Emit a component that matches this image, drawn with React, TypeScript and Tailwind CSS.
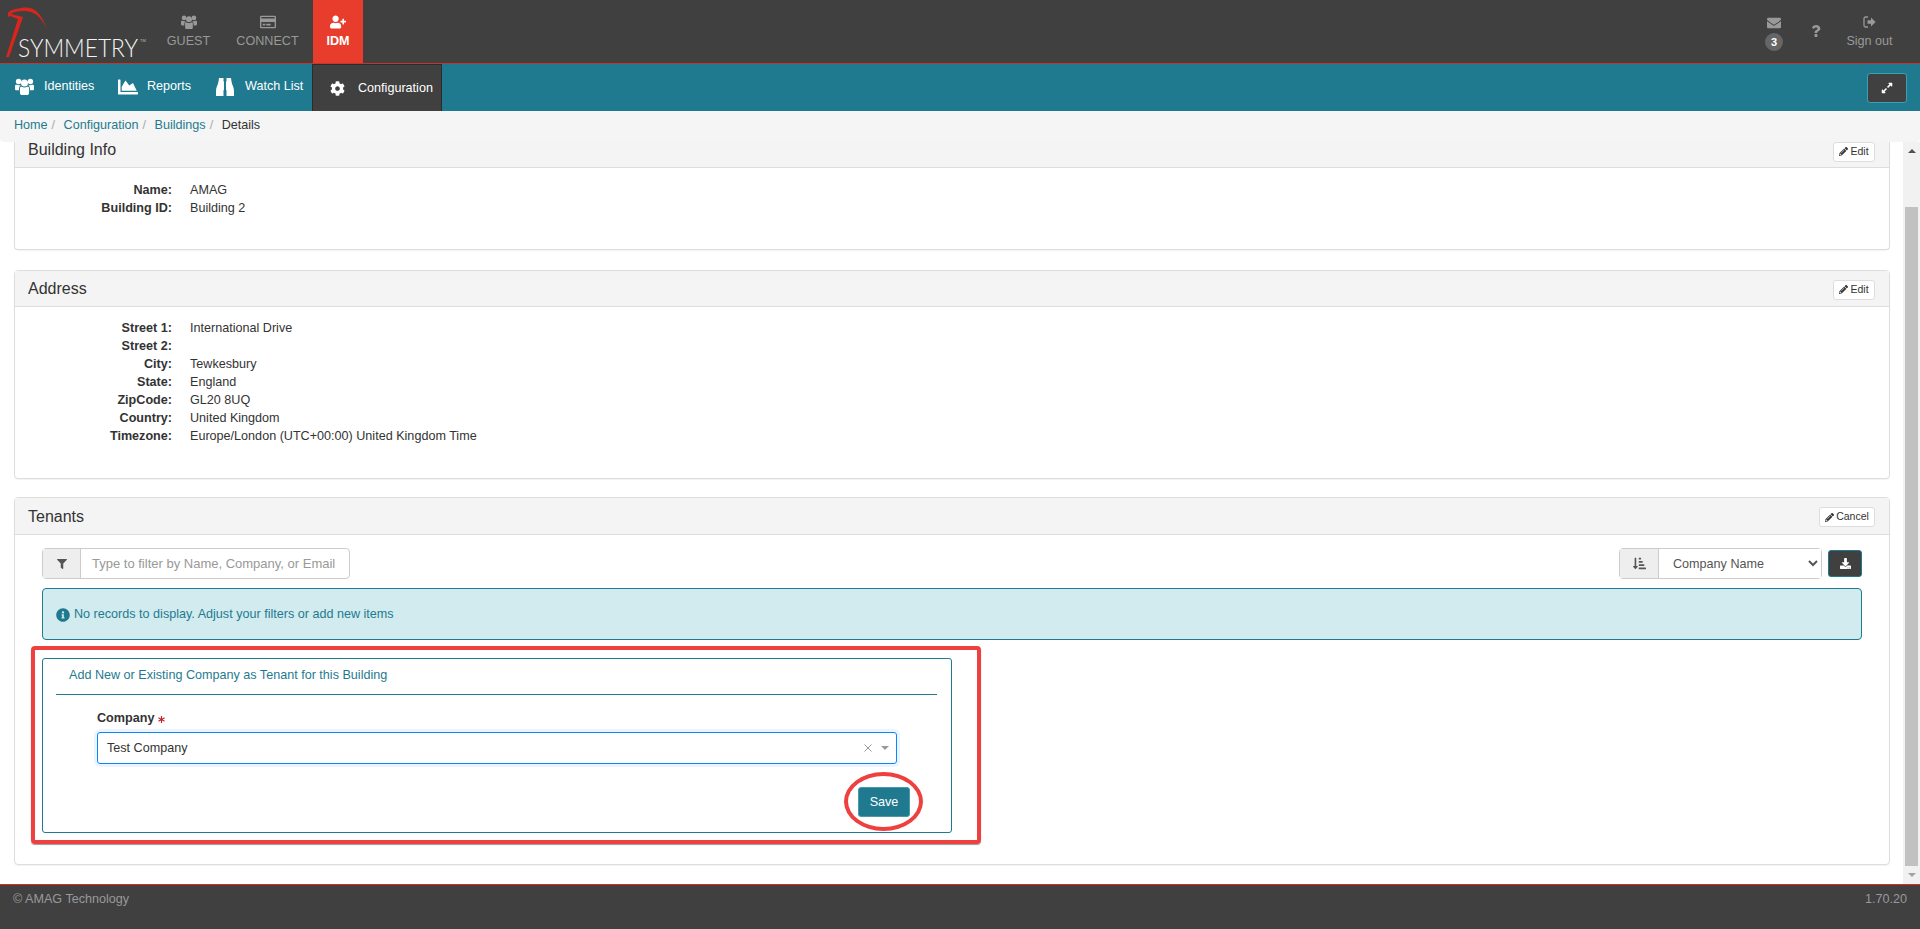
import type { ReactNode } from "react";
import {
  FaAsterisk,
  FaChartArea,
  FaCog,
  FaDownload,
  FaEnvelope,
  FaExpandAlt,
  FaFilter,
  FaInfoCircle,
  FaPencilAlt,
  FaQuestion,
  FaRegCreditCard,
  FaSortAmountDownAlt,
  FaUserPlus,
} from "react-icons/fa";

const Logo = () => (
  <svg width="150" height="63" viewBox="0 0 150 63" className="shrink-0">
    <path
      d="M8 17 L8 13 C10 10 15 9 21 8 C32 6 40 10 47 29 C41 17 35 11 24 11 C18 11 13 12 11 14 L23 17 L9 57 L6 57 L18 19 L10 16 Z"
      fill="#d9261c"
    />
    <text x="18" y="57" fontSize="25" fontWeight="300" fill="#f2f2f2" textLength="120" lengthAdjust="spacingAndGlyphs" fontFamily="Lato, sans-serif">
      SYMMETRY
    </text>
    <text x="140" y="42" fontSize="4" fill="#bbbbbb" fontFamily="Liberation Sans, sans-serif">
      TM
    </text>
  </svg>
);

// font awesome 4 style group icon, the package only has the wider newer one
const UsersIcon = ({ size }: { size: number }) => (
  <svg width={size} height={size * 0.9} viewBox="0 0 20 18" fill="currentColor">
    <circle cx="3.8" cy="3.6" r="2.9" />
    <circle cx="16.2" cy="3.6" r="2.9" />
    <path d="M0 8.5C0 7.5 1 7 2 7.2 3 7.8 5 7.8 6 7.4 4.5 9 4 11 4.2 13H1.5C0.5 13 0 12.4 0 11.5Z" />
    <path d="M20 8.5C20 7.5 19 7 18 7.2 17 7.8 15 7.8 14 7.4 15.500 9 16 11 15.800 13H18.500C19.500 13 20 12.400 20 11.500Z" />
    <circle cx="10" cy="5.2" r="3.7" />
    <path d="M5.200 11C5.200 9.600 6 9 7 9.300 8.800 10.200 11.200 10.200 13 9.300 14 9 14.800 9.600 14.800 11V15.500C14.800 17 13.800 18 12.500 18H7.500C6.200 18 5.200 17 5.200 15.500Z" />
  </svg>
);

const BinocularsIcon = () => (
  <svg width="18" height="18" viewBox="0 0 18 18" fill="currentColor">
    <path d="M3 0H7.500V3.500H8V12H7.500V18H0.500C0 18 0 17.500 0 17V13C0 9 2 7 2.500 3.500Z" />
    <path d="M15 0H10.500V3.500H10V12H10.500V18H17.500C18 18 18 17.500 18 17V13C18 9 16 7 15.500 3.500Z" />
  </svg>
);

const SignOutIcon = () => (
  <svg width="13" height="12" viewBox="0 0 13 12" fill="none">
    <path d="M5 1H2.5A1.5 1.5 0 0 0 1 2.5v7A1.5 1.5 0 0 0 2.5 11H5" stroke="currentColor" strokeWidth="1.3" />
    <path d="M4.5 4.2H8V1.5L12.6 6 8 10.5V7.8H4.5Z" fill="currentColor" />
  </svg>
);

const TopTab = ({ icon, label, width, active }: { icon: ReactNode; label: string; width: string; active?: boolean }) => (
  <div
    className={`flex h-full flex-col items-center pt-[15px] text-[12.6px] leading-[14px] ${width} ${
      active ? "bg-[#e83c2c] font-bold text-white" : "text-[#999999]"
    }`}
  >
    <div className="flex h-[14px] items-center text-[16px]">{icon}</div>
    <div className="mt-[5px]">{label}</div>
  </div>
);

const NavItem = ({ icon, label, width, gap }: { icon: ReactNode; label: string; width: string; gap: string }) => (
  <div className={`flex h-full items-center pb-[2px] text-white ${width} ${gap}`}>
    {icon}
    <span className="text-[12.6px]">{label}</span>
  </div>
);

const Crumb = ({ label }: { label: string }) => (
  <>
    <span className="text-[#1f7a8f]">{label}</span>
    <span className="ml-[4px] mr-[8.5px] text-[#aaaaaa]">/</span>
  </>
);

const SmallButton = ({ label, className }: { label: string; className: string }) => (
  <div
    className={`flex h-[20px] items-center justify-center gap-[2px] rounded-[3px] border border-[#dddddd] bg-white text-[10.5px] text-[#333333] ${className}`}
  >
    <FaPencilAlt className="text-[9px]" />
    {label}
  </div>
);

const CardHeader = ({ title, height, button, titleClass }: { title: string; height: string; button: ReactNode; titleClass?: string }) => (
  <div className={`flex items-center justify-between border-b border-[#dddddd] bg-[#f4f4f4] pl-[13px] pr-[14px] ${height}`}>
    <span className={`text-[16px] text-[#333333] ${titleClass || ""}`}>{title}</span>
    {button}
  </div>
);

const Rows = ({ rows }: { rows: [string, string][] }) => (
  <div className="text-[12.6px] leading-[18px] text-[#333333]">
    {rows.map(([label, value]) => (
      <div key={label} className="flex h-[18px]">
        <div className="w-[157px] text-right font-bold">{label}</div>
        <div className="ml-[18px]">{value}</div>
      </div>
    ))}
  </div>
);

export default function App() {
  return (
    <div className="flex h-[929px] w-[1920px] flex-col overflow-hidden bg-white font-['Liberation_Sans',Arial,sans-serif]">
      {/* top bar */}
      <div className="flex h-[64px] shrink-0 border-b border-[#c0392b] bg-[#404040]">
        <Logo />
        <div className="ml-[5px] flex h-[63px]">
          <TopTab icon={<UsersIcon size={16} />} label="GUEST" width="w-[67px]" />
          <TopTab icon={<FaRegCreditCard />} label="CONNECT" width="w-[91px]" />
          <TopTab icon={<FaUserPlus />} label="IDM" width="w-[50px]" active />
        </div>
        <div className="ml-auto flex h-[63px] text-[#999999]">
          <div className="flex w-[18px] flex-col items-center pt-[16px]">
            <FaEnvelope className="text-[14px]" />
            <div className="mt-[3px] flex h-[18px] w-[18px] items-center justify-center rounded-full bg-[#666666] text-[11px] font-bold text-white">
              3
            </div>
          </div>
          <div className="ml-[26px] flex w-[14px] items-start justify-center pt-[25px]">
            <FaQuestion className="text-[12px]" />
          </div>
          <div className="ml-[23px] mr-[27px] flex w-[47px] flex-col items-center pt-[16px] text-[12.6px]">
            <SignOutIcon />
            <div className="mt-[6px] whitespace-nowrap leading-[14px]">Sign out</div>
          </div>
        </div>
      </div>

      {/* module nav */}
      <div className="flex h-[47px] shrink-0 items-center bg-[#1f7a8f] pl-[15px] pr-[13px]">
        <NavItem icon={<UsersIcon size={19} />} label="Identities" width="w-[103px]" gap="gap-[10px]" />
        <NavItem icon={<FaChartArea className="text-[20px]" />} label="Reports" width="w-[98px]" gap="gap-[9px]" />
        <NavItem icon={<BinocularsIcon />} label="Watch List" width="w-[96px]" gap="gap-[11px]" />
        <div className="flex h-full w-[130px] items-center gap-[13px] border-x border-t border-[#2b2b2b] bg-[#404040] pl-[17px] text-[12.6px] text-white">
          <FaCog className="text-[15px]" />
          Configuration
        </div>
        <div className="ml-auto flex h-[30px] w-[40px] items-center justify-center rounded-[3px] border border-[#3aa0b5] bg-[#404040] text-[12px] text-white">
          <FaExpandAlt />
        </div>
      </div>

      {/* breadcrumb */}
      <div className="flex h-[31px] shrink-0 items-center rounded-b-[4px] bg-[#f5f5f5] pb-[3px] pl-[14px] text-[12.6px]">
        <Crumb label="Home" />
        <Crumb label="Configuration" />
        <Crumb label="Buildings" />
        <span className="text-[#333333]">Details</span>
      </div>

      <div className="flex min-h-0 flex-1">
        <div className="min-w-0 flex-1 pl-[14px] pr-[13px]">
          {/* building info, scrolled so its header is partly hidden */}
          <div className="h-[108px] rounded-b-[4px] border-x border-b border-[#dddddd] shadow-[0_1px_1px_rgba(0,0,0,0.05)]">
            <CardHeader
              title="Building Info"
              height="h-[26px]"
              titleClass="-mt-[10px]"
              button={<SmallButton label="Edit" className="-mt-[6px] w-[42px]" />}
            />
            <div className="pt-[13px]">
              <Rows
                rows={[
                  ["Name:", "AMAG"],
                  ["Building ID:", "Building 2"],
                ]}
              />
            </div>
          </div>

          {/* address */}
          <div className="mt-[20px] h-[209px] rounded-[4px] border border-[#dddddd] shadow-[0_1px_1px_rgba(0,0,0,0.05)]">
            <CardHeader title="Address" height="h-[36px]" button={<SmallButton label="Edit" className="mt-[2px] w-[42px]" />} />
            <div className="pt-[12px]">
              <Rows
                rows={[
                  ["Street 1:", "International Drive"],
                  ["Street 2:", ""],
                  ["City:", "Tewkesbury"],
                  ["State:", "England"],
                  ["ZipCode:", "GL20 8UQ"],
                  ["Country:", "United Kingdom"],
                  ["Timezone:", "Europe/London (UTC+00:00) United Kingdom Time"],
                ]}
              />
            </div>
          </div>

          {/* tenants */}
          <div className="mt-[18px] h-[368px] rounded-[4px] border border-[#dddddd] shadow-[0_1px_1px_rgba(0,0,0,0.05)]">
            <CardHeader title="Tenants" height="h-[37px]" titleClass="mt-[2px]" button={<SmallButton label="Cancel" className="mt-[2px] w-[56px]" />} />
            <div className="pl-[27px] pr-[27px] pt-[13px]">
              <div className="flex h-[31px] items-center justify-between">
                <div className="flex h-[31px] w-[308px] rounded-[4px] border border-[#cccccc] text-[13px]">
                  <div className="flex w-[38px] items-center justify-center border-r border-[#cccccc] bg-[#eeeeee] text-[#555555]">
                    <FaFilter className="text-[10px]" />
                  </div>
                  <div className="flex items-center whitespace-nowrap pl-[11px] pt-[1px] text-[#999999]">Type to filter by Name, Company, or Email</div>
                </div>
                <div className="flex items-center">
                  <div className="flex h-[31px] w-[203px] rounded-[4px] border border-[#cccccc] text-[12.6px]">
                    <div className="flex w-[39px] shrink-0 items-center justify-center border-r border-[#cccccc] bg-[#eeeeee] text-[#555555]">
                      <FaSortAmountDownAlt className="text-[13px]" />
                    </div>
                    <select className="min-w-0 flex-1 bg-white pl-[10px] text-[12.6px] text-[#555555] outline-none">
                      <option>Company Name</option>
                    </select>
                  </div>
                  <div className="ml-[6px] flex h-[27px] w-[34px] items-center justify-center rounded-[3px] border border-[#1f7a8f] bg-[#404040] text-[11px] text-white">
                    <FaDownload />
                  </div>
                </div>
              </div>

              <div className="mt-[9px] flex h-[52px] items-center gap-[4px] rounded-[4px] border border-[#1f7a8f] bg-[#d1ebef] pl-[13px] pt-[1px] text-[12.6px] text-[#1f7a8f]">
                <FaInfoCircle className="text-[14px]" />
                No records to display. Adjust your filters or add new items
              </div>

              {/* highlighted add form */}
              <div className="relative -ml-[11px] mt-[6px] w-[950px] rounded-[4px] border-[4px] border-[#ef4040] pb-[7px] pl-[7px] pr-[25px] pt-[8px] shadow-[0_1px_1px_rgba(0,0,0,0.4)]">
                <div className="h-[175px] rounded-[3px] border border-[#1f7a8f] pl-[13px] pr-[14px]">
                  <div className="flex h-[36px] items-center border-b border-[#1f7a8f] pb-[2px] pl-[13px] text-[12.6px] text-[#1f7a8f]">
                    Add New or Existing Company as Tenant for this Building
                  </div>
                  <div className="pl-[41px] pr-[40px]">
                    <div className="mt-[16px] flex items-center gap-[4px] text-[12.6px] font-bold leading-[14px] text-[#333333]">
                      Company <FaAsterisk className="mt-[2px] text-[7px] text-[#c1272d]" />
                    </div>
                    <div className="mt-[7px] flex h-[32px] items-center justify-between rounded-[3px] border border-[#0a84ff] pl-[9px] pr-[7px] text-[12.6px] text-[#333333] shadow-[0_0_0_3px_rgba(0,123,255,0.08)]">
                      Test Company
                      <div className="flex items-center gap-[9px] text-[#999999]">
                        <svg width="8" height="8" viewBox="0 0 8 8" stroke="currentColor" strokeWidth="1">
                          <path d="M0.5 0.5 7.5 7.5M7.5 0.5 0.5 7.5" />
                        </svg>
                        <div className="h-0 w-0 border-x-[4px] border-t-[4px] border-x-transparent border-t-[#999999]" />
                      </div>
                    </div>
                    <div className="mt-[23px] flex justify-end">
                      <div className="-mr-[13px] flex h-[30px] w-[52px] items-center justify-center rounded-[3px] border border-[#4f98a9] bg-[#1f7a8f] text-[12.6px] text-white">
                        Save
                      </div>
                    </div>
                  </div>
                </div>
                {/* hand-drawn circle round Save */}
                <div className="absolute left-[809px] top-[122px] h-[59px] w-[79px] rounded-[50%] border-[4px] border-[#ef4040]" />
              </div>
            </div>
          </div>
        </div>

        {/* scrollbar */}
        <div className="flex w-[17px] shrink-0 flex-col bg-[#f1f1f1]">
          <div className="flex h-[17px] items-center justify-center">
            <div className="h-0 w-0 border-x-[4px] border-b-[4px] border-x-transparent border-b-[#505050]" />
          </div>
          <div className="ml-[2px] mr-[2px] mt-[48px] flex-1 bg-[#c1c1c1]" />
          <div className="flex h-[18px] items-center justify-center">
            <div className="h-0 w-0 border-x-[4px] border-t-[4px] border-x-transparent border-t-[#a3a3a3]" />
          </div>
        </div>
      </div>

      {/* footer */}
      <div className="flex h-[45px] shrink-0 justify-between border-t border-[#e8261c] bg-[#404040] px-[13px] pt-[7px] text-[12.6px] leading-[14px] text-[#999999]">
        <span>© AMAG Technology</span>
        <span>1.70.20</span>
      </div>
    </div>
  );
}
